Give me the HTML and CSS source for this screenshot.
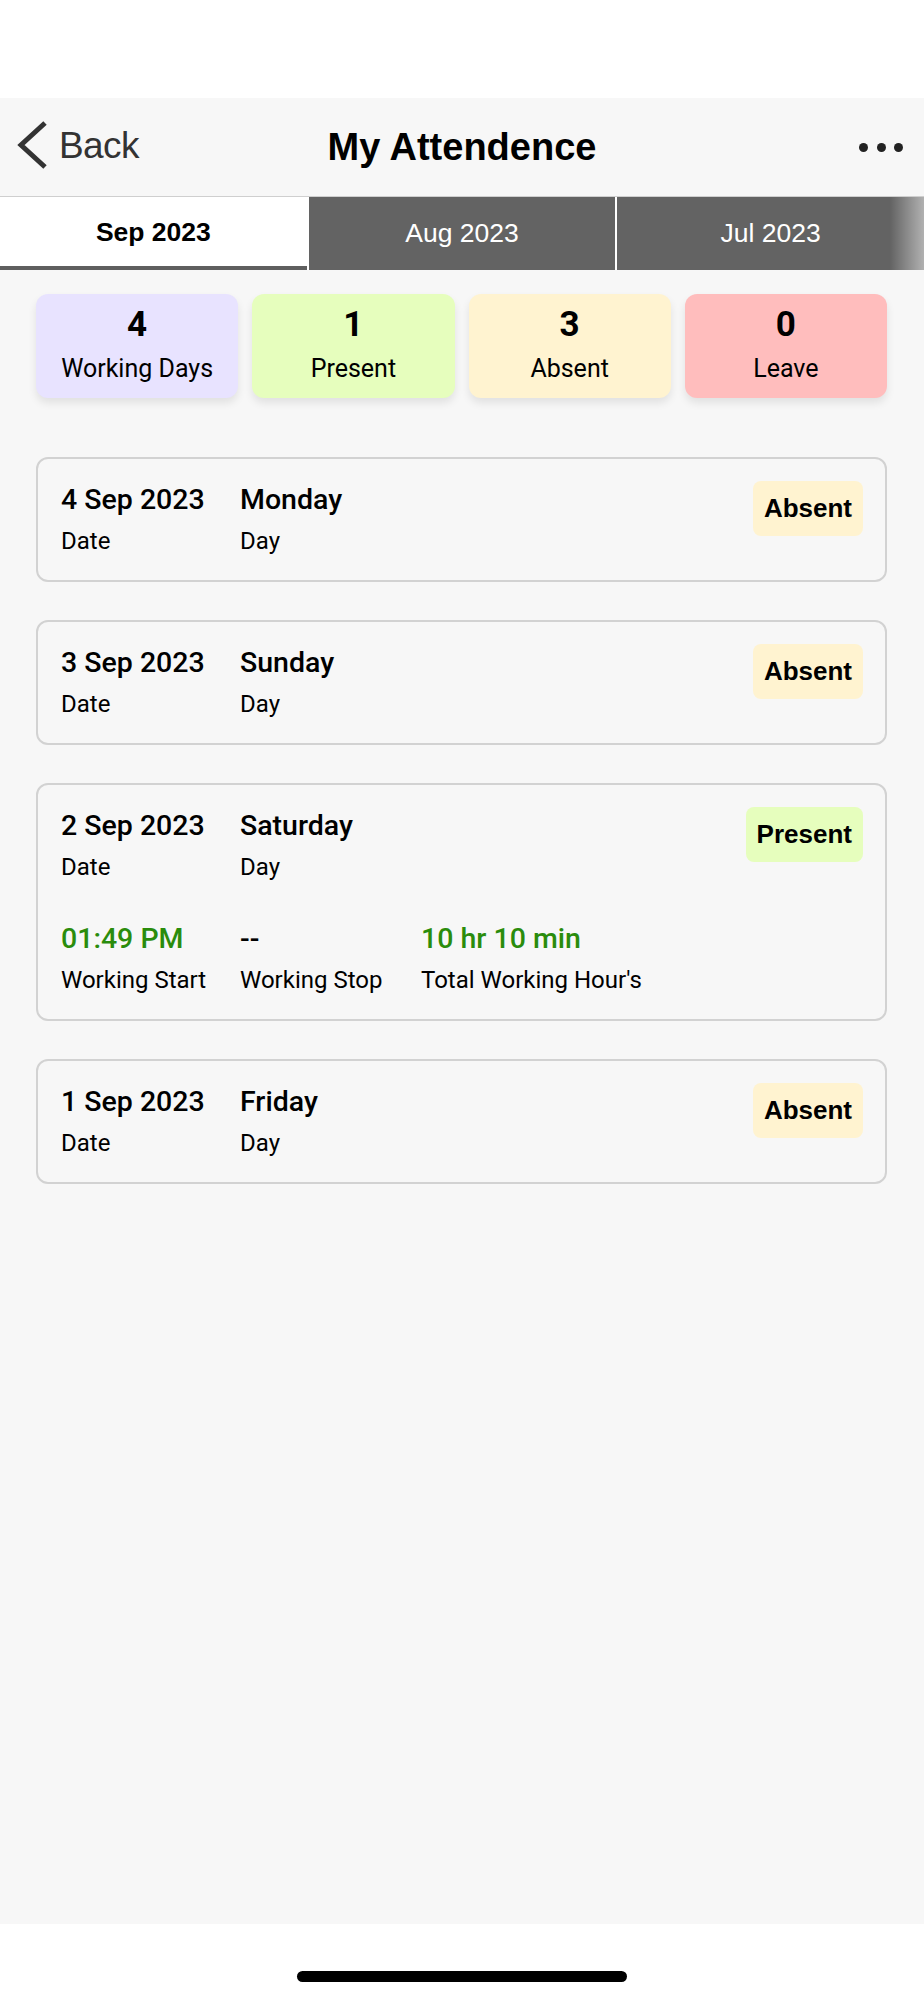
FILE: index.html
```html
<!DOCTYPE html>
<html lang="en">
<head>
<meta charset="utf-8">
<title>My Attendence</title>
<link rel="stylesheet" href="styles.css">
</head>
<body>
<div class="status"></div>
<div class="app">
  <header class="header">
    <div class="back">
      <svg class="chev" width="36" height="50" viewBox="0 0 36 50"><polyline points="31,3 7,25 31,47" fill="none" stroke="#333" stroke-width="5"/></svg>
      <span class="back-text">Back</span>
    </div>
    <h1 class="title">My Attendence</h1>
    <div class="more"><span class="dot"></span><span class="dot"></span><span class="dot"></span></div>
  </header>
  <nav class="tabs">
    <div class="tab active">Sep 2023</div>
    <div class="tab">Aug 2023</div>
    <div class="tab">Jul 2023</div>
  </nav>
  <section class="stats">
    <div class="stat purple"><div class="num">4</div><div class="lbl">Working Days</div></div>
    <div class="stat green"><div class="num">1</div><div class="lbl">Present</div></div>
    <div class="stat yellow"><div class="num">3</div><div class="lbl">Absent</div></div>
    <div class="stat pink"><div class="num">0</div><div class="lbl">Leave</div></div>
  </section>
  <section class="list">
    <div class="card">
      <div class="rows">
        <div class="row">
          <div class="cell c1"><div class="val">4 Sep 2023</div><div class="key">Date</div></div>
          <div class="cell c2"><div class="val">Monday</div><div class="key">Day</div></div>
        </div>
      </div>
      <div class="badge absent">Absent</div>
    </div>
    <div class="card">
      <div class="rows">
        <div class="row">
          <div class="cell c1"><div class="val">3 Sep 2023</div><div class="key">Date</div></div>
          <div class="cell c2"><div class="val">Sunday</div><div class="key">Day</div></div>
        </div>
      </div>
      <div class="badge absent">Absent</div>
    </div>
    <div class="card">
      <div class="rows">
        <div class="row">
          <div class="cell c1"><div class="val">2 Sep 2023</div><div class="key">Date</div></div>
          <div class="cell c2"><div class="val">Saturday</div><div class="key">Day</div></div>
        </div>
        <div class="row">
          <div class="cell c1"><div class="val green-text">01:49 PM</div><div class="key">Working Start</div></div>
          <div class="cell c2"><div class="val">--</div><div class="key">Working Stop</div></div>
          <div class="cell c3"><div class="val green-text">10 hr 10 min</div><div class="key">Total Working Hour's</div></div>
        </div>
      </div>
      <div class="badge present">Present</div>
    </div>
    <div class="card">
      <div class="rows">
        <div class="row">
          <div class="cell c1"><div class="val">1 Sep 2023</div><div class="key">Date</div></div>
          <div class="cell c2"><div class="val">Friday</div><div class="key">Day</div></div>
        </div>
      </div>
      <div class="badge absent">Absent</div>
    </div>
  </section>
</div>
<div class="home"><span class="indicator"></span></div>
</body>
</html>
```
FILE: styles.css
```css
* { box-sizing: border-box; }
html, body { margin: 0; padding: 0; }
body {
  width: 924px;
  height: 2000px;
  background: #ffffff;
  font-family: Roboto, "Liberation Sans", Arial, sans-serif;
  color: #000;
  overflow: hidden;
}
.status { height: 98px; background: #ffffff; }
.app {
  height: 1826px;
  background: #f7f7f7;
}
.header {
  height: 98px;
  display: grid;
  grid-template-columns: 1fr auto 1fr;
  align-items: center;
}
.back {
  display: flex;
  align-items: center;
  padding-left: 14px;
}
.chev { display: block; margin-top: -4px; }
.back-text {
  font-family: "Liberation Sans", Arial, sans-serif;
  font-size: 37px;
  letter-spacing: -0.6px;
  color: #333;
  margin-left: 9px;
  margin-top: -2px;
}
.title {
  margin: 0;
  font-family: "Liberation Sans", Arial, sans-serif;
  font-weight: bold;
  font-size: 38px;
  color: #000;
}
.more {
  display: flex;
  justify-content: flex-end;
  align-items: center;
  gap: 8.5px;
  padding-right: 21px;
}
.dot {
  width: 9px;
  height: 9px;
  border-radius: 50%;
  background: #222;
}
.tabs {
  position: relative;
  display: flex;
  gap: 2px;
  height: 74px;
  border-top: 1px solid #cfcfcf;
  background: #ffffff;
}
.tabs::after {
  content: "";
  position: absolute;
  right: 0;
  top: 0;
  bottom: 0;
  width: 34px;
  background: linear-gradient(to right, rgba(255,255,255,0), rgba(255,255,255,0.5));
}
.tab {
  flex: 1;
  display: flex;
  align-items: center;
  justify-content: center;
  background: #636363;
  color: #ffffff;
  font-family: "Liberation Sans", Arial, sans-serif;
  font-size: 26.5px;
}
.tab.active {
  background: #ffffff;
  color: #000;
  font-weight: bold;
  border-bottom: 4px solid #5f5f5f;
  padding-top: 1px;
}
.stats {
  display: grid;
  grid-template-columns: repeat(4, 1fr);
  gap: 14px;
  padding: 0 37px 0 36px;
  margin-top: 24px;
}
.stat {
  height: 104px;
  border-radius: 12px;
  padding-top: 11px;
  text-align: center;
  box-shadow: 0 5px 9px rgba(0,0,0,0.09);
}
.num {
  font-weight: bold;
  font-size: 35px;
  line-height: 40px;
}
.lbl {
  font-size: 25px;
  line-height: 30px;
  margin-top: 9px;
}
.purple { background: #e8e3ff; }
.green { background: #e6febd; }
.yellow { background: #fff3d0; }
.pink { background: #ffbdbd; }
.list {
  display: flex;
  flex-direction: column;
  gap: 38px;
  padding: 0 37px 0 36px;
  margin-top: 59px;
}
.card {
  display: flex;
  justify-content: space-between;
  align-items: flex-start;
  border: 2px solid #d2d2d2;
  border-radius: 12px;
  padding: 22px 22px 24px 23px;
}
.rows {
  display: flex;
  flex-direction: column;
  gap: 38px;
}
.row { display: flex; }
.c1 { width: 179px; }
.c2 { width: 181px; }
.val {
  font-weight: 500;
  font-size: 28.5px;
  line-height: 38px;
}
.key {
  font-size: 24px;
  line-height: 30px;
  margin-top: 7px;
}
.green-text { color: #2a8c0c; }
.badge {
  font-family: "Liberation Sans", Arial, sans-serif;
  font-weight: bold;
  font-size: 26px;
  line-height: 55px;
  height: 55px;
  padding: 0 11px;
  border-radius: 8px;
}
.badge.absent { background: #fff3d0; }
.badge.present { background: #e6febd; }
.home {
  height: 76px;
  display: flex;
  justify-content: center;
  padding-top: 47px;
}
.indicator {
  width: 330px;
  height: 11px;
  border-radius: 6px;
  background: #000;
}
```
